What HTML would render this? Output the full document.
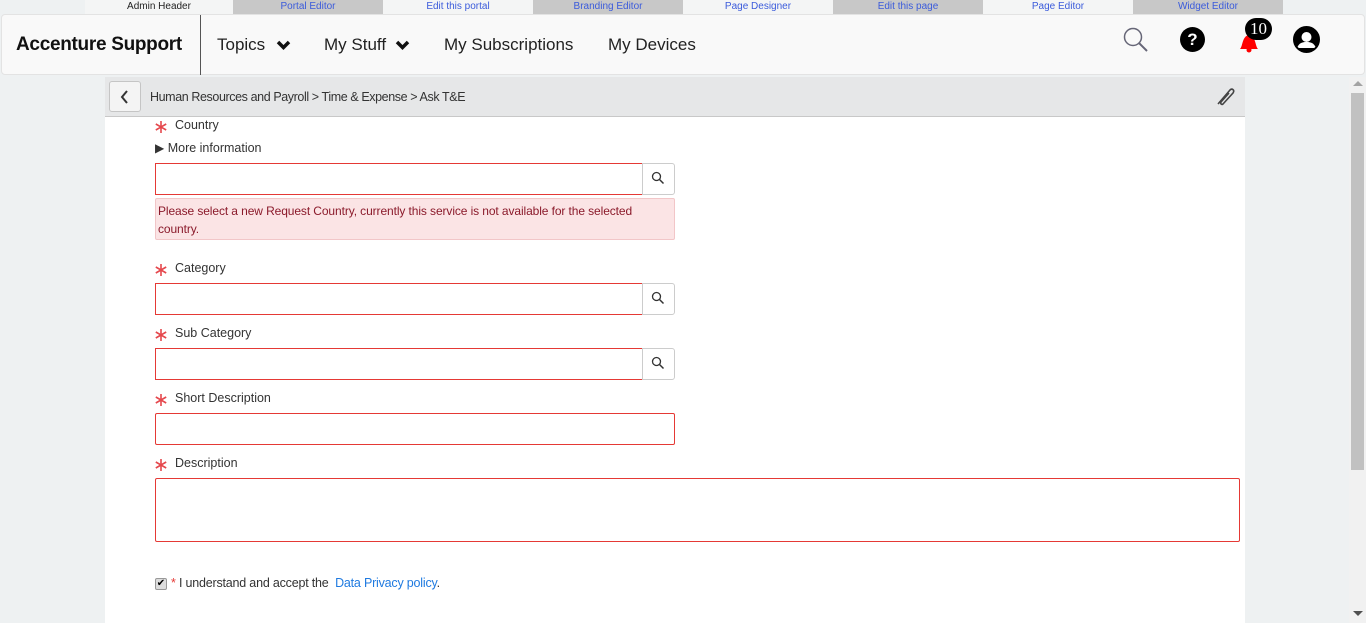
<!DOCTYPE html>
<html><head><style>
*{box-sizing:border-box;margin:0;padding:0}
body{width:1366px;height:623px;overflow:hidden;background:#eef1f2;font-family:"Liberation Sans",sans-serif;position:relative}
.abs{position:absolute}
.tab{position:absolute;top:0;height:14px;width:150px;font-size:10px;text-align:center;line-height:13px;color:#3b5bdb}
.g{background:#c8c8c8}
.w{background:#f4f5f5}
.hdr{position:absolute;left:1px;top:14px;width:1364px;height:61px;background:#f9f9f9;border:1px solid #e3e3e3;border-radius:4px}
.nav{position:absolute;top:35px;font-size:17px;color:#222}
.lbl{position:absolute;left:155px;font-size:12.5px;color:#333}
.lbl span.t{margin-left:20px}
.inp{position:absolute;left:155px;width:488px;height:32px;border:1px solid #e53935;background:#fff}
.btn{position:absolute;left:642px;width:33px;height:32px;border:1px solid #ccc;border-radius:0 3px 3px 0;background:#fff}
</style></head><body>
<div class="tab" style="left:85px;width:148px;color:#222;background:#f4f5f5">Admin Header</div>
<div class="tab g" style="left:233px">Portal Editor</div>
<div class="tab w" style="left:383px">Edit this portal</div>
<div class="tab g" style="left:533px">Branding Editor</div>
<div class="tab w" style="left:683px">Page Designer</div>
<div class="tab g" style="left:833px">Edit this page</div>
<div class="tab w" style="left:983px">Page Editor</div>
<div class="tab g" style="left:1133px">Widget Editor</div>
<div class="hdr"></div>
<div class="abs" style="left:16px;top:34px;font-size:19px;font-weight:bold;color:#111;letter-spacing:-0.3px">Accenture Support</div>
<div class="abs" style="left:200px;top:15px;width:1px;height:60px;background:#555"></div>
<div class="nav" style="left:217px">Topics</div>
<div class="nav" style="left:324px">My Stuff</div>
<svg class="abs" style="left:276px;top:40px" width="15" height="11" viewBox="0 0 15 11"><path d="M2 2l5.5 5.5L13 2" stroke="#111" stroke-width="3.5" fill="none"/></svg>
<svg class="abs" style="left:395px;top:40px" width="15" height="11" viewBox="0 0 15 11"><path d="M2 2l5.5 5.5L13 2" stroke="#111" stroke-width="3.5" fill="none"/></svg>
<div class="nav" style="left:444px">My Subscriptions</div>
<div class="nav" style="left:608px">My Devices</div>
<svg class="abs" style="left:1122px;top:27px" width="28" height="26"><circle cx="11" cy="10" r="8.5" stroke="#667" stroke-width="1.5" fill="none"/><path d="M17 16l8 8" stroke="#667" stroke-width="2"/></svg>
<div class="abs" style="left:1180px;top:27px;width:25px;height:25px;border-radius:50%;background:#000;color:#fff;font-weight:bold;font-size:17px;text-align:center;line-height:25px">?</div>
<svg class="abs" style="left:1237px;top:28px" width="24" height="26"><path d="M3 21c3-3 2-13 9-14 7 1 6 11 9 14z" fill="#f00"/><circle cx="12" cy="22" r="2.5" fill="#f00"/></svg>
<div class="abs" style="left:1245px;top:18px;width:27px;height:22px;border-radius:11px;background:#000;color:#fff;font-family:'Liberation Serif',serif;font-size:17px;text-align:center;line-height:22px">10</div>
<svg class="abs" style="left:1293px;top:26px" width="27" height="27"><circle cx="13.5" cy="13.5" r="12.5" fill="#000"/><circle cx="13.5" cy="11" r="5" fill="#fff"/><path d="M4 22c2-5 5-6 9.5-6s7.5 1 9.5 6" fill="#fff"/><circle cx="13.5" cy="13.5" r="12.5" fill="none" stroke="#000" stroke-width="2"/></svg>
<div class="abs" style="left:105px;top:77px;width:1140px;height:546px;background:#fff"></div>
<div class="abs" style="left:105px;top:77px;width:1140px;height:40px;background:#e6e7e8;border-bottom:1px solid #c8c8c8"></div>
<div class="abs" style="left:109px;top:81px;width:32px;height:31px;border:1px solid #c5c5c5;border-radius:3px;background:#f4f4f4"></div>
<svg class="abs" style="left:119px;top:89px" width="12" height="16"><path d="M8 2L3 8l5 6" stroke="#333" stroke-width="2" fill="none"/></svg>
<div class="abs" style="left:150px;top:90px;font-size:12.5px;color:#333;letter-spacing:-0.4px">Human Resources and Payroll &gt; Time &amp; Expense &gt; Ask T&amp;E</div>
<svg class="abs" style="left:1213px;top:85px" width="24" height="24"><path d="M5 19L17 5c2-2 5 0 3 3L10 19c-1 1-3 0-2-2l8-9" stroke="#444" stroke-width="1.6" fill="none"/></svg>
<div class="lbl" style="top:118px"><span class="t">Country</span></div>
<div class="lbl" style="top:141px"><span style="font-size:12px">&#9654;</span> More information</div>
<div class="inp" style="top:163px"></div><div class="btn" style="top:163px"></div>
<div class="abs" style="left:155px;top:198px;width:520px;height:42px;background:#fbe4e5;border:1px solid #f2c6c8;border-radius:2px;color:#8b1a2b;font-size:12px;padding:3px 2px;line-height:18px;letter-spacing:-0.1px">Please select a new Request Country, currently this service is not available for the selected country.</div>
<div class="lbl" style="top:261px"><span class="t">Category</span></div>
<div class="inp" style="top:283px"></div><div class="btn" style="top:283px"></div>
<div class="lbl" style="top:326px"><span class="t">Sub Category</span></div>
<div class="inp" style="top:348px"></div><div class="btn" style="top:348px"></div>
<div class="lbl" style="top:391px"><span class="t">Short Description</span></div>
<div class="inp" style="top:413px;width:520px;border-radius:2px"></div>
<div class="lbl" style="top:456px"><span class="t">Description</span></div>
<div class="inp" style="top:478px;width:1085px;height:64px;border-radius:2px"></div>
<svg class="abs" style="left:154px;top:120px" width="14" height="14"><g stroke="#e5484d" stroke-width="1.6"><path d="M7 1v12M1.8 4l10.4 6M1.8 10l10.4-6"/></g></svg>
<svg class="abs" style="left:154px;top:263px" width="14" height="14"><g stroke="#e5484d" stroke-width="1.6"><path d="M7 1v12M1.8 4l10.4 6M1.8 10l10.4-6"/></g></svg>
<svg class="abs" style="left:154px;top:328px" width="14" height="14"><g stroke="#e5484d" stroke-width="1.6"><path d="M7 1v12M1.8 4l10.4 6M1.8 10l10.4-6"/></g></svg>
<svg class="abs" style="left:154px;top:393px" width="14" height="14"><g stroke="#e5484d" stroke-width="1.6"><path d="M7 1v12M1.8 4l10.4 6M1.8 10l10.4-6"/></g></svg>
<svg class="abs" style="left:154px;top:458px" width="14" height="14"><g stroke="#e5484d" stroke-width="1.6"><path d="M7 1v12M1.8 4l10.4 6M1.8 10l10.4-6"/></g></svg>
<svg class="abs" style="left:651px;top:171px" width="14" height="14"><circle cx="5.5" cy="5.5" r="4" stroke="#333" stroke-width="1.3" fill="none"/><path d="M8.5 8.5l4 4" stroke="#333" stroke-width="1.5"/></svg>
<svg class="abs" style="left:651px;top:291px" width="14" height="14"><circle cx="5.5" cy="5.5" r="4" stroke="#333" stroke-width="1.3" fill="none"/><path d="M8.5 8.5l4 4" stroke="#333" stroke-width="1.5"/></svg>
<svg class="abs" style="left:651px;top:356px" width="14" height="14"><circle cx="5.5" cy="5.5" r="4" stroke="#333" stroke-width="1.3" fill="none"/><path d="M8.5 8.5l4 4" stroke="#333" stroke-width="1.5"/></svg>
<div class="abs" style="left:155px;top:578px;width:12px;height:12px;border:1px solid #999;border-radius:2px;background:#ddd;font-size:10px;line-height:10px;text-align:center">&#10004;</div>
<div class="abs" style="left:171px;top:576px;font-size:12.5px;color:#333;letter-spacing:-0.2px"><span style="color:#e53935">*</span> I understand and accept the &nbsp;<span style="color:#1f7ae0">Data Privacy policy</span>.</div>
<div class="abs" style="left:1349px;top:77px;width:17px;height:546px;background:#f1f1f1"></div>
<div class="abs" style="left:1351px;top:93px;width:13px;height:377px;background:#c1c1c1"></div>
<svg class="abs" style="left:1353px;top:81px" width="10" height="6"><path d="M0 5l5-5 5 5z" fill="#a3a3a3"/></svg>
<svg class="abs" style="left:1353px;top:611px" width="10" height="6"><path d="M0 0l5 5 5-5z" fill="#505050"/></svg>
</body></html>
